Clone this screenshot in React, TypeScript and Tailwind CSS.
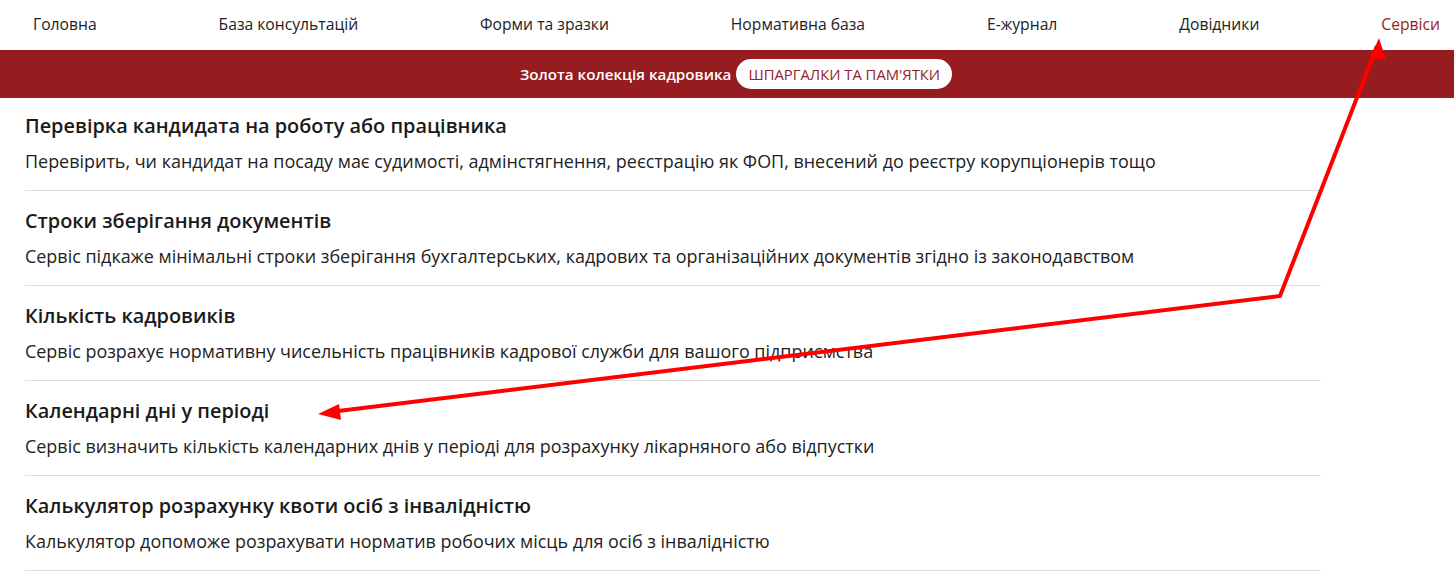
const NAV = ['Головна', 'База консультацій', 'Форми та зразки', 'Нормативна база', 'Е-журнал', 'Довідники', 'Сервіси']

const SERVICES = [
  {
    title: 'Перевірка кандидата на роботу або працівника',
    text: 'Перевірить, чи кандидат на посаду має судимості, адмінстягнення, реєстрацію як ФОП, внесений до реєстру корупціонерів тощо',
  },
  {
    title: 'Строки зберігання документів',
    text: 'Сервіс підкаже мінімальні строки зберігання бухгалтерських, кадрових та організаційних документів згідно із законодавством',
  },
  {
    title: 'Кількість кадровиків',
    text: 'Сервіс розрахує нормативну чисельність працівників кадрової служби для вашого підприємства',
  },
  {
    title: 'Календарні дні у періоді',
    text: 'Сервіс визначить кількість календарних днів у періоді для розрахунку лікарняного або відпустки',
  },
  {
    title: 'Калькулятор розрахунку квоти осіб з інвалідністю',
    text: 'Калькулятор допоможе розрахувати норматив робочих місць для осіб з інвалідністю',
  },
]

function Arrow() {
  // annotation drawn over the page
  return (
    <svg className="pointer-events-none absolute left-0 top-0" width="1454" height="582">
      <polyline
        points="1377,46 1280,296 330,412"
        fill="none"
        stroke="#ff0000"
        strokeWidth="4"
        strokeLinejoin="miter"
      />
      <polygon points="1379,38 1370,58 1386,60" fill="#ff0000" />
      <polygon points="318,414 339,404 341,420" fill="#ff0000" />
    </svg>
  )
}

export default function App() {
  return (
    <div className="relative min-h-[582px] bg-white font-['Open_Sans',sans-serif] text-[#1f1f1f]">
      <nav className="flex h-[50px] items-center justify-between pl-[33px] pr-[14px] text-[15.7px]">
        {NAV.map((item) => (
          <a key={item} href="#" className={item === 'Сервіси' ? 'text-[#9b1c20]' : 'text-[#222]'}>
            {item}
          </a>
        ))}
      </nav>

      <div className="flex h-[48px] items-center justify-center gap-[5px] bg-[#961c20] pl-[18px]">
        <span className="text-[15.2px] font-semibold text-white">Золота колекція кадровика</span>
        <a
          href="#"
          className="flex h-[30px] items-center rounded-full bg-white px-[12px] text-[14.8px] text-[#962226]"
        >
          ШПАРГАЛКИ ТА ПАМ&apos;ЯТКИ
        </a>
      </div>

      <ul className="ml-[25px] w-[1296px]">
        {SERVICES.map((s) => (
          <li key={s.title} className="border-b border-[#dddddd] pb-[15px] pt-4 first:pt-[14px]">
            <h3 className="text-[19.9px] font-semibold leading-[28px] text-[#1a1a1a]">{s.title}</h3>
            <p className="mt-[7px] text-[17.94px] leading-[28px] text-[#222]">{s.text}</p>
          </li>
        ))}
      </ul>

      <Arrow />
    </div>
  )
}
